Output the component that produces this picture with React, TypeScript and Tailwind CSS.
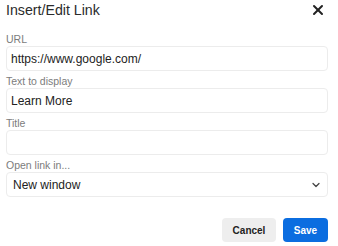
import { X, ChevronDown } from "lucide-react"

const field = "h-[25px] w-full rounded-[4px] border border-[#ececec] bg-white px-[4px] text-[12px] text-[#222] outline-none"

function Field({ label, value }: { label: string; value: string }) {
  return (
    <div className="flex flex-col">
      <label className="h-[14px] text-[10.5px] leading-[14px] text-[#7c7c7c]">{label}</label>
      <input className={field} defaultValue={value} />
    </div>
  )
}

export default function App() {
  return (
    <div
      className="h-[246px] w-[338px] bg-white px-[6px] pr-[10px]"
      style={{ fontFamily: '"Liberation Sans", Arial, sans-serif' }}
    >
      <div className="flex h-[20px] items-center justify-between">
        <h2 className="text-[14.2px] leading-[20px] text-[#2b2b2b]">Insert/Edit Link</h2>
        <button className="mr-[2px] text-[#222]">
          <X size={16} strokeWidth={3} />
        </button>
      </div>

      <div className="mt-[12px] flex flex-col gap-[3px]">
        <Field label="URL" value="https://www.google.com/" />
        <Field label="Text to display" value="Learn More" />
        <Field label="Title" value="" />
        <div className="flex flex-col">
          <label className="h-[14px] text-[10.5px] leading-[14px] text-[#7c7c7c]">Open link in...</label>
          <div className="flex h-[25px] w-full items-center justify-between rounded-[4px] border border-[#ececec] bg-white pl-[6px] pr-[5px] text-[12px] text-[#222]">
            <span>New window</span>
            <ChevronDown size={12} strokeWidth={2.5} className="text-[#444]" />
          </div>
        </div>
      </div>

      <div className="mt-[21px] flex justify-end gap-[7px]">
        <button className="h-[24px] w-[54px] rounded-[4px] bg-[#eeeeee] text-[10px] font-bold text-[#222]">
          Cancel
        </button>
        <button className="h-[24px] w-[45px] rounded-[4px] bg-[#0b6de0] text-[10px] font-bold text-white">
          Save
        </button>
      </div>
    </div>
  )
}
